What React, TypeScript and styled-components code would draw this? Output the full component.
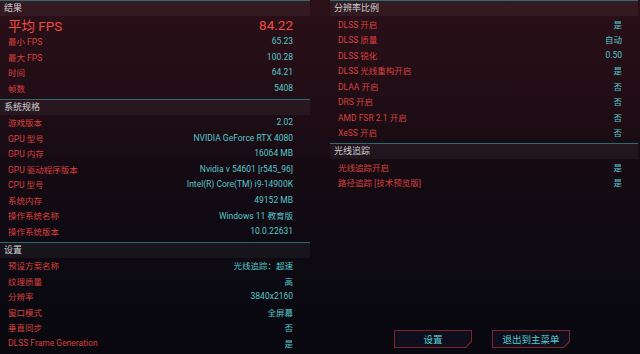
import React from "react";
import styled, { createGlobalStyle } from "styled-components";

const GlobalStyle = createGlobalStyle`
  html, body {
    margin: 0;
    padding: 0;
    width: 640px;
    height: 354px;
    overflow: hidden;
    background: #0a0910;
  }
`;

type Row = [string, string];

const results: Row[] = [
  ["最小 FPS", "65.23"],
  ["最大 FPS", "100.28"],
  ["时间", "64.21"],
  ["帧数", "5408"],
];

const system: Row[] = [
  ["游戏版本", "2.02"],
  ["GPU 型号", "NVIDIA GeForce RTX 4080"],
  ["GPU 内存", "16064 MB"],
  ["GPU 驱动程序版本", "Nvidia v 54601 [r545_96]"],
  ["CPU 型号", "Intel(R) Core(TM) i9-14900K"],
  ["系统内存", "49152 MB"],
  ["操作系统名称", "Windows 11 教育版"],
  ["操作系统版本", "10.0.22631"],
];

const settings: Row[] = [
  ["预设方案名称", "光线追踪：超速"],
  ["纹理质量", "高"],
  ["分辨率", "3840x2160"],
  ["窗口模式", "全屏幕"],
  ["垂直同步", "否"],
  ["DLSS Frame Generation", "是"],
];

const scaling: Row[] = [
  ["DLSS 开启", "是"],
  ["DLSS 质量", "自动"],
  ["DLSS 锐化", "0.50"],
  ["DLSS 光线重构开启", "是"],
  ["DLAA 开启", "否"],
  ["DRS 开启", "否"],
  ["AMD FSR 2.1 开启", "否"],
  ["XeSS 开启", "否"],
];

const raytracing: Row[] = [
  ["光线追踪开启", "是"],
  ["路径追踪 [技术预览版]", "是"],
];

function Rows({ rows, right }: { rows: Row[]; right?: boolean }) {
  return (
    <>
      {rows.map(([k, v]) => (
        <Line key={k} $right={right}>
          <Label>{k}</Label>
          <Value>{v}</Value>
        </Line>
      ))}
    </>
  );
}

export default function App() {
  return (
    <>
      <GlobalStyle />
      <Screen>
        <Column>
          <Section>
            <Header>结果</Header>
            <BigRow>
              <BigText>平均 FPS</BigText>
              <BigText>84.22</BigText>
            </BigRow>
            <Rows rows={results} />
          </Section>
          <Section>
            <Header>系统规格</Header>
            <Rows rows={system} />
          </Section>
          <Section>
            <Header>设置</Header>
            <Rows rows={settings} />
          </Section>
        </Column>
        <Column>
          <Section>
            <Header>分辨率比例</Header>
            <Rows rows={scaling} right />
          </Section>
          <Section>
            <Header>光线追踪</Header>
            <Rows rows={raytracing} right />
          </Section>
          <Buttons>
            <CutButton>
              <ButtonText>设置</ButtonText>
            </CutButton>
            <CutButton>
              <ButtonText>退出到主菜单</ButtonText>
            </CutButton>
          </Buttons>
        </Column>
      </Screen>
    </>
  );
}

const Screen = styled.div`
  width: 640px;
  height: 354px;
  display: grid;
  grid-template-columns: 310px 308px;
  column-gap: 20px;
  background: linear-gradient(
    180deg,
    #2b1018 0%,
    #230e16 22%,
    #160b13 48%,
    #0d0a12 70%,
    #09080f 100%
  );
  font-family: "Roboto", "Noto Sans CJK SC", sans-serif;
  overflow: hidden;
`;

const Column = styled.div`
  display: flex;
  flex-direction: column;
  gap: 3px;
`;

const Section = styled.div`
  display: flex;
  flex-direction: column;
  border-top: 1.5px solid #2d6a6e;
`;

const Header = styled.div`
  height: 15px;
  line-height: 15px;
  padding-left: 4px;
  font-size: 9px;
  color: #cfcfd2;
  background: rgba(255, 255, 255, 0.045);
`;

const Line = styled.div<{ $right?: boolean }>`
  height: 15.5px;
  display: flex;
  align-items: center;
  justify-content: space-between;
  padding: 0 ${(p) => (p.$right ? 16 : 17)}px 0 8px;
  font-size: 8.5px;
`;

const BigRow = styled(Line)`
  height: 17.5px;
`;

const BigText = styled.span`
  font-size: 13.5px;
  color: #ef4a45;
`;

const Label = styled.span`
  color: #d8413d;
`;

const Value = styled.span`
  color: #56c6cb;
`;

const Buttons = styled.div`
  margin-top: auto;
  display: flex;
  justify-content: center;
  gap: 20px;
  padding: 0 0 6px 0;
  margin-left: -4px;
`;

const CutButton = styled.div`
  position: relative;
  width: 78px;
  height: 18px;
  display: flex;
  align-items: center;
  justify-content: center;
  background: #7e2429;
  clip-path: polygon(0 0, 100% 0, 100% 65%, calc(100% - 6px) 100%, 0 100%);
  &::before {
    content: "";
    position: absolute;
    inset: 1px;
    background: #0d101c;
    clip-path: polygon(0 0, 100% 0, 100% 62%, calc(100% - 5.5px) 100%, 0 100%);
  }
`;

const ButtonText = styled.span`
  position: relative;
  font-size: 9.5px;
  color: #5ccad2;
`;
